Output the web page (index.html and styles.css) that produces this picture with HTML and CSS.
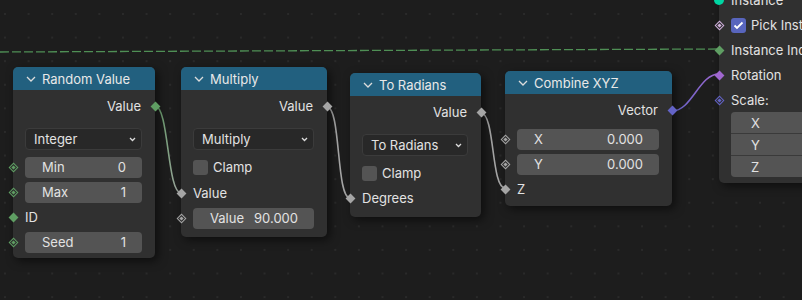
FILE: index.html
```html
<!DOCTYPE html>
<html lang="en">
<head>
    <meta charset="UTF-8">
    <title>Node Editor</title>
    <link rel="stylesheet" href="styles.css">
</head>
<body>
    <div class="canvas">
        <svg class="links" width="802" height="300" viewBox="0 0 802 300">
            <defs>
                <linearGradient id="g1" gradientUnits="userSpaceOnUse" x1="155" y1="0" x2="181" y2="0">
                    <stop offset="0" stop-color="#5f9e63"/>
                    <stop offset="1" stop-color="#a5a5a5"/>
                </linearGradient>
                <linearGradient id="g4" gradientUnits="userSpaceOnUse" x1="672" y1="0" x2="719" y2="0">
                    <stop offset="0" stop-color="#6363c7"/>
                    <stop offset="1" stop-color="#a067cf"/>
                </linearGradient>
            </defs>
            <path class="link dashed" d="M0,52 L719,49"/>
            <path class="link" stroke="url(#g1)" d="M155,106 C169,106 167,193 181,193"/>
            <path class="link gray" d="M327,107 C341,107 336,198 350,198"/>
            <path class="link gray" d="M481,113 C495,113 491,188 505,188"/>
            <path class="link" stroke="url(#g4)" d="M672,111 C692,111 699,74 719,74"/>
        </svg>

        <!-- Random Value -->
        <div class="node n-random">
            <div class="head"><svg class="chev" width="10" height="6" viewBox="0 0 10 6"><polyline points="1,1 5,5 9,1"/></svg>Random Value</div>
            <div class="body">
                <div class="row out"><span>Value</span><i class="sock right green"></i></div>
                <div class="select"><span>Integer</span><svg width="7" height="5" viewBox="0 0 7 5"><polyline points="1,1 3.5,3.5 6,1"/></svg></div>
                <div class="row"><i class="sock green dot"></i><div class="field"><span>Min</span><span>0</span></div></div>
                <div class="row"><i class="sock green dot"></i><div class="field"><span>Max</span><span>1</span></div></div>
                <div class="row"><i class="sock green"></i><span>ID</span></div>
                <div class="row"><i class="sock green dot"></i><div class="field"><span>Seed</span><span>1</span></div></div>
            </div>
        </div>

        <!-- Multiply -->
        <div class="node n-multiply">
            <div class="head"><svg class="chev" width="10" height="6" viewBox="0 0 10 6"><polyline points="1,1 5,5 9,1"/></svg>Multiply</div>
            <div class="body">
                <div class="row out"><span>Value</span><i class="sock right gray"></i></div>
                <div class="select"><span>Multiply</span><svg width="7" height="5" viewBox="0 0 7 5"><polyline points="1,1 3.5,3.5 6,1"/></svg></div>
                <div class="row"><span class="check"></span><span>Clamp</span></div>
                <div class="row push"><i class="sock gray"></i><span>Value</span></div>
                <div class="row"><i class="sock gray dot"></i><div class="field"><span>Value</span><span>90.000</span></div></div>
            </div>
        </div>

        <!-- To Radians -->
        <div class="node n-radians">
            <div class="head"><svg class="chev" width="10" height="6" viewBox="0 0 10 6"><polyline points="1,1 5,5 9,1"/></svg>To Radians</div>
            <div class="body">
                <div class="row out"><span>Value</span><i class="sock right gray"></i></div>
                <div class="select"><span>To Radians</span><svg width="7" height="5" viewBox="0 0 7 5"><polyline points="1,1 3.5,3.5 6,1"/></svg></div>
                <div class="row"><span class="check"></span><span>Clamp</span></div>
                <div class="row"><i class="sock gray"></i><span>Degrees</span></div>
            </div>
        </div>

        <!-- Combine XYZ -->
        <div class="node n-combine">
            <div class="head"><svg class="chev" width="10" height="6" viewBox="0 0 10 6"><polyline points="1,1 5,5 9,1"/></svg>Combine XYZ</div>
            <div class="body">
                <div class="row out"><span>Vector</span><i class="sock right blue"></i></div>
                <div class="row"><i class="sock gray dot"></i><div class="field"><span>X</span><span>0.000</span></div></div>
                <div class="row"><i class="sock gray dot"></i><div class="field"><span>Y</span><span>0.000</span></div></div>
                <div class="row"><i class="sock gray"></i><span>Z</span></div>
            </div>
        </div>

        <!-- Instance on Points (cut off) -->
        <div class="node n-instance">
            <div class="head"><svg class="chev" width="10" height="6" viewBox="0 0 10 6"><polyline points="1,1 5,5 9,1"/></svg>Instance on Points</div>
            <div class="body">
                <div class="row"><i class="sock geo"></i><span>Points</span></div>
                <div class="row"><i class="sock pink dot"></i><span>Selection</span></div>
                <div class="row"><i class="sock geo"></i><span>Instance</span></div>
                <div class="row"><i class="sock pink dot"></i><span class="check on"><svg width="11" height="9" viewBox="0 0 11 9"><polyline points="1.5,4.5 4,7 9.5,1.5"/></svg></span><span>Pick Instance</span></div>
                <div class="row"><i class="sock green"></i><span>Instance Index</span></div>
                <div class="row"><i class="sock purple"></i><span>Rotation</span></div>
                <div class="row"><i class="sock blue dot"></i><span>Scale:</span></div>
                <div class="vec">
                    <div class="vrow"><span>X</span><span>1.000</span></div>
                    <div class="vrow"><span>Y</span><span>1.000</span></div>
                    <div class="vrow"><span>Z</span><span>1.000</span></div>
                </div>
            </div>
        </div>
    </div>
</body>
</html>
```

FILE: styles.css
```css
body {
    margin: 0;
    background-color: #1d1d1d;
    font-family: 'Inter', 'DejaVu Sans', sans-serif;
    font-size: 13px;
    color: #e2e2e2;
}

.canvas {
    position: relative;
    width: 802px;
    height: 300px;
    overflow: hidden;
    background-color: #1d1d1d;
    background-image: radial-gradient(circle, #2a2a2a 1px, transparent 1.3px);
    background-size: 23.6px 23.6px;
    background-position: -6.8px 2.2px;
}

.links {
    position: absolute;
    left: 0;
    top: 0;
}

.link {
    fill: none;
    stroke-width: 1.6;
}

.link.gray {
    stroke: #a5a5a5;
}

.link.dashed {
    stroke: #4f8f55;
    stroke-width: 1.3;
    stroke-dasharray: 9 3;
}

/* nodes */
.node {
    position: absolute;
    background-color: #303030;
    border-radius: 5px;
    box-shadow: 3px 3px 10px rgba(0, 0, 0, 0.55);
}

.n-random { left: 13px; top: 67px; width: 142px; }
.n-multiply { left: 181px; top: 67px; width: 146px; }
.n-radians { left: 350px; top: 73px; width: 131px; }
.n-combine { left: 505px; top: 71px; width: 167px; }
.n-instance { left: 719px; top: -89px; width: 200px; }

.head {
    height: 23px;
    background-color: #22607f;
    border-radius: 5px 5px 0 0;
    display: flex;
    align-items: center;
    gap: 6px;
    padding-left: 13px;
    color: #e8e8e8;
}

.chev polyline,
.select polyline {
    fill: none;
    stroke: #dcdcdc;
    stroke-width: 1.3;
}

.body {
    display: flex;
    flex-direction: column;
    gap: 3px;
    padding: 5px 0 8px;
}

.n-random .body { padding-bottom: 5px; }
.n-combine .body { padding-bottom: 6px; }
.n-instance .body { padding-bottom: 6px; }

.row {
    position: relative;
    height: 22px;
    display: flex;
    align-items: center;
    padding: 0 13px 0 12px;
}

.row.out {
    justify-content: flex-end;
    padding-right: 14px;
    margin-bottom: 8px;
}

.n-combine .row.out { margin-bottom: 4px; }

.row.push { margin-top: 1px; }

.field {
    flex: 1;
    height: 21px;
    background-color: #545454;
    border-radius: 4px;
    display: flex;
    justify-content: space-between;
    align-items: center;
    padding: 0 16px 0 17px;
}

.select {
    height: 20px;
    margin: 0 13px 3px 12px;
    background-color: #282828;
    border: 1px solid #3b3b3b;
    border-radius: 4px;
    display: flex;
    justify-content: space-between;
    align-items: center;
    padding: 0 5px 0 8px;
}

.check {
    width: 15px;
    height: 15px;
    border-radius: 3px;
    background-color: #545454;
    margin-right: 5px;
    display: flex;
    align-items: center;
    justify-content: center;
}

.check.on {
    background-color: #5865bd;
}

.check polyline {
    fill: none;
    stroke: #ffffff;
    stroke-width: 1.8;
}

/* vector fields */
.vec {
    margin: -2px 13px 0 12px;
    border-radius: 4px;
    overflow: hidden;
    display: flex;
    flex-direction: column;
    gap: 1px;
    background-color: #3a3a3a;
}

.vrow {
    height: 21px;
    background-color: #545454;
    display: flex;
    justify-content: space-between;
    align-items: center;
    padding: 0 16px 0 20px;
}

/* sockets */
.sock {
    position: absolute;
    left: -3.5px;
    top: 7.5px;
    width: 7px;
    height: 7px;
    transform: rotate(45deg);
}

.sock.right {
    left: auto;
    right: -3.5px;
}

.sock.dot::after {
    content: "";
    position: absolute;
    left: 1px;
    top: 1px;
    width: 3px;
    height: 3px;
    border: 1px solid #2a2a2a;
    background-color: inherit;
}

.sock.green { background-color: #5f9e63; }
.sock.gray { background-color: #a5a5a5; }
.sock.blue { background-color: #6363c7; }
.sock.purple { background-color: #a067cf; }
.sock.pink { background-color: #d0b0dc; }

.sock.geo {
    transform: none;
    left: -5px;
    top: 6px;
    width: 10px;
    height: 10px;
    border-radius: 50%;
    background-color: #00d6a3;
}
```
